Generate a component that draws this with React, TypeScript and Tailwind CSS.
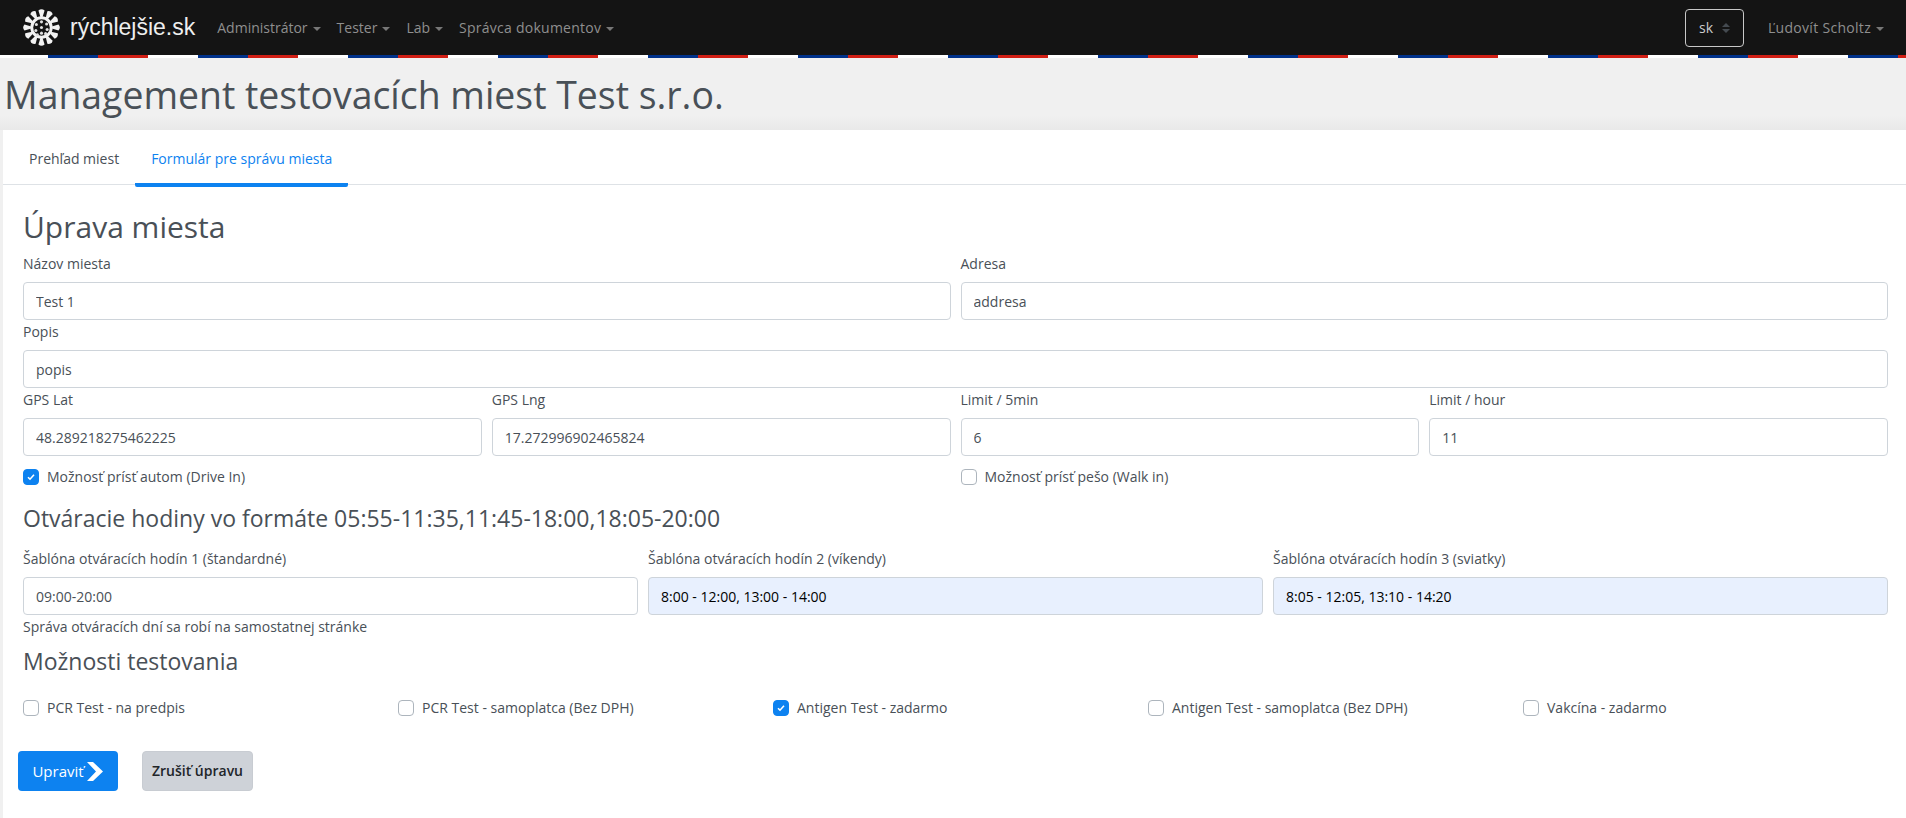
const spikes = [0, 30, 60, 90, 120, 150, 180, 210, 240, 270, 300, 330];
const dots = [
  [20, 14.5], [25, 16.5], [15, 17], [20, 20], [25.5, 22], [14.5, 23], [20, 25.5], [24, 26], [16, 27],
];

function Logo() {
  return (
    <svg viewBox="0 0 40 40" className="w-[41px] h-[41px] shrink-0 -ml-[1px]">
      {spikes.map((a) => (
        <g key={a} transform={`rotate(${a} 20 20)`}>
          <path d="M19 10 L17 3.4 Q20 0.8 23 3.4 L21 10 Z" fill="#f2f2f2" />
        </g>
      ))}
      <circle cx="20" cy="20" r="9.5" fill="#141414" stroke="#f2f2f2" strokeWidth="2.8" />
      {dots.map(([x, y]) => (
        <circle key={`${x}-${y}`} cx={x} cy={y} r="1.5" fill="#e0e0e0" />
      ))}
    </svg>
  );
}

function Caret() {
  return <span className="inline-block ml-[5px] align-middle border-x-[4px] border-x-transparent border-t-[4px] border-t-[#777]" />;
}

function NavItem({ label, className = '' }: { label: string; className?: string }) {
  return (
    <a className={`text-sm text-[#8f8f8f] whitespace-nowrap ${className}`}>
      {label}
      <Caret />
    </a>
  );
}

function Field({ label, value, filled = false }: { label: string; value: string; filled?: boolean }) {
  return (
    <div className="px-[5px] min-w-0">
      <label className="block h-[30px] pt-[1px] text-sm leading-[21px] text-[#495057]">{label}</label>
      <input
        readOnly
        value={value}
        className={`block w-full h-[38px] px-3 text-sm rounded border border-[#ced4da] outline-none ${
          filled ? 'bg-[#e8f0fe] text-black' : 'bg-white text-[#495057]'
        }`}
      />
    </div>
  );
}

function Check({ label, checked = false }: { label: string; checked?: boolean }) {
  return (
    <div className="flex items-center gap-2 px-[5px] text-sm text-[#495057]">
      <span
        className={`flex items-center justify-center w-4 h-4 shrink-0 rounded-[4px] border ${
          checked ? 'bg-[#0d82f0] border-[#0d82f0]' : 'bg-white border-[#adb5bd]'
        }`}
      >
        {checked && (
          <svg viewBox="0 0 8 8" className="w-2 h-2">
            <path d="M1 4.2 L3 6.2 L7 1.8" fill="none" stroke="#fff" strokeWidth="1.6" />
          </svg>
        )}
      </span>
      <span className="whitespace-nowrap">{label}</span>
    </div>
  );
}

export default function App() {
  return (
    <div className="h-[818px] overflow-hidden flex flex-col bg-[#f0f0f0] font-['Open_Sans','Noto_Sans',sans-serif]">
      {/* Navbar */}
      <nav className="h-[55px] shrink-0 flex items-center bg-[#141414] pl-[22px] pr-[22px]">
        <Logo />
        <span className="ml-2 text-[23px] text-[#eeeeee] font-['Liberation_Sans',sans-serif]">rýchlejšie.sk</span>
        <div className="flex items-center gap-[16px] ml-[22px]">
          <NavItem label="Administrátor" />
          <NavItem label="Tester" />
          <NavItem label="Lab" />
          <NavItem label="Správca dokumentov" className="tracking-[0.25px]" />
        </div>
        <div className="ml-auto flex items-center gap-[24px]">
          <button className="flex items-center justify-between w-[59px] h-[38px] px-[13px] rounded border border-[#c8c8c8] text-sm text-[#cccccc]">
            sk
            <span className="flex flex-col gap-[2px]">
              <span className="border-x-[4px] border-x-transparent border-b-[4px] border-b-[#444a50]" />
              <span className="border-x-[4px] border-x-transparent border-t-[4px] border-t-[#444a50]" />
            </span>
          </button>
          <NavItem label="Ľudovít Scholtz" className="tracking-[0.3px]" />
        </div>
      </nav>
      {/* Flag stripe */}
      <div className="h-[3px] shrink-0 bg-[repeating-linear-gradient(90deg,#fff_0,#fff_48px,#00318a_48px,#00318a_98px,#d11e14_98px,#d11e14_148px,#fff_148px,#fff_150px)]" />

      <header className="h-[72px] shrink-0 pl-[4px] bg-gradient-to-b from-[#f0f0f0] from-80% to-[#e9e9e9]">
        <h1 className="text-[37.4px] leading-[74px] text-[#495057]">Management testovacích miest Test s.r.o.</h1>
      </header>

      <main className="flex-1 ml-[3px] bg-white">
        <div className="flex h-[55px] border-b border-[#dee2e6] pl-[13px] text-sm">
          <a className="pl-[13px] pr-[16px] leading-[57px] text-[#495057]">Prehľad miest</a>
          <a className="h-[57px] px-[16px] leading-[57px] text-[#0d82f0] border-b-4 border-[#0d82f0] rounded-b-[2px]">
            Formulár pre správu miesta
          </a>
        </div>

        <div className="pl-[15px] pr-[13px]">
          <h3 className="h-[50px] px-[5px] pt-[22px] text-[30px] leading-[40px] text-[#495057]">Úprava miesta</h3>
          <div className="mt-[17px] grid grid-cols-2">
            <Field label="Názov miesta" value="Test 1" />
            <Field label="Adresa" value="addresa" />
          </div>
          <Field label="Popis" value="popis" />
          <div className="grid grid-cols-4">
            <Field label="GPS Lat" value="48.289218275462225" />
            <Field label="GPS Lng" value="17.272996902465824" />
            <Field label="Limit / 5min" value="6" />
            <Field label="Limit / hour" value="11" />
          </div>
          <div className="grid grid-cols-2 mt-[11px] h-[16px]">
            <Check label="Možnosť prísť autom (Drive In)" checked />
            <Check label="Možnosť prísť pešo (Walk in)" />
          </div>
          <h4 className="mt-[10px] h-[50px] px-[5px] text-[23px] leading-[50px] text-[#495057]">
            Otváracie hodiny vo formáte 05:55-11:35,11:45-18:00,18:05-20:00
          </h4>
          <div className="grid grid-cols-3 mt-[4px]">
            <Field label="Šablóna otváracích hodín 1 (štandardné)" value="09:00-20:00" />
            <Field label="Šablóna otváracích hodín 2 (víkendy)" value="8:00 - 12:00, 13:00 - 14:00" filled />
            <Field label="Šablóna otváracích hodín 3 (sviatky)" value="8:05 - 12:05, 13:10 - 14:20" filled />
          </div>
          <p className="h-[22px] px-[5px] text-sm leading-[24px] text-[#495057]">Správa otváracích dní sa robí na samostatnej stránke</p>
          <h4 className="h-[48px] px-[5px] text-[23px] leading-[48px] text-[#495057]">Možnosti testovania</h4>
          <div className="grid grid-cols-5 mt-[13px] h-[16px]">
            <Check label="PCR Test - na predpis" />
            <Check label="PCR Test - samoplatca (Bez DPH)" />
            <Check label="Antigen Test - zadarmo" checked />
            <Check label="Antigen Test - samoplatca (Bez DPH)" />
            <Check label="Vakcína - zadarmo" />
          </div>
          <div className="flex gap-[24px] mt-[37px]">
            <button className="flex items-center justify-center gap-[3px] w-[100px] h-[40px] rounded bg-[#0d82f0] text-[15px] text-white">
              Upraviť
              <svg viewBox="0 0 17 19" className="w-[17px] h-[19px]">
                <path d="M0 0 H6 L16 9.5 L6 19 H0 L9 9.5 Z" fill="#fff" />
              </svg>
            </button>
            <button className="w-[111px] h-[40px] rounded bg-[#ced2d8] border border-[#c8ccd2] text-sm font-semibold text-[#212529]">
              Zrušiť úpravu
            </button>
          </div>
        </div>
      </main>
    </div>
  );
}
